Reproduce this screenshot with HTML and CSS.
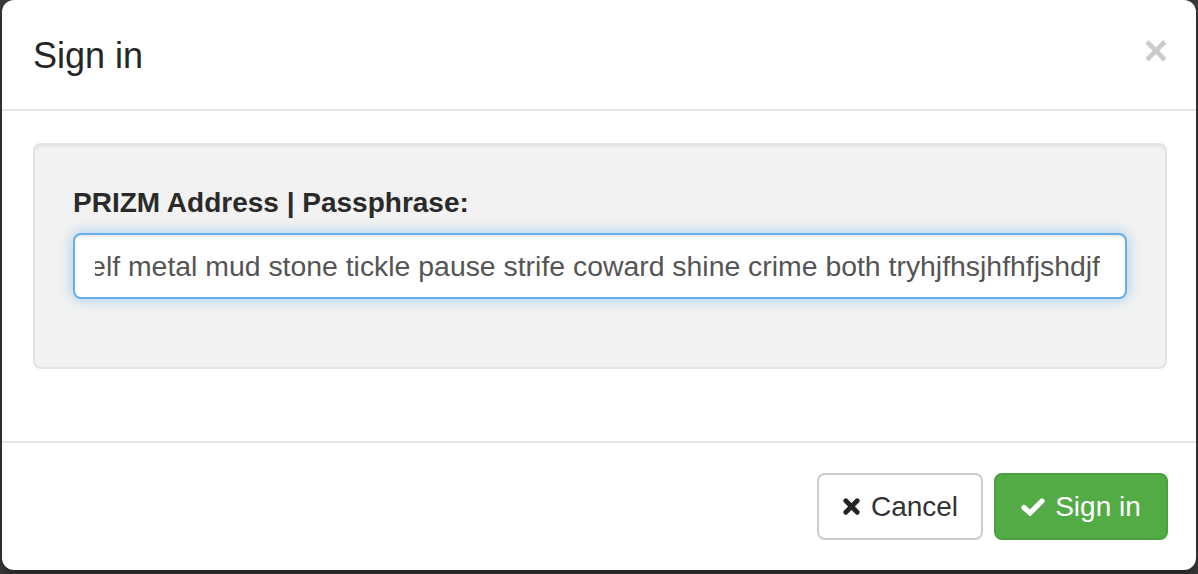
FILE: index.html
```html
<!DOCTYPE html>
<html lang="en">
<head>
<meta charset="utf-8">
<title>Sign in</title>
<link rel="stylesheet" href="styles.css">
</head>
<body>
<div class="modal">
  <div class="modal-header">
    <h4 class="modal-title">Sign in</h4>
    <button class="close" type="button">&times;</button>
  </div>
  <div class="modal-body">
    <div class="well">
      <label class="form-label">PRIZM Address | Passphrase:</label>
      <div class="form-control">
        <div class="field-clip"><span class="value">myself metal mud stone tickle pause strife coward shine crime both tryhjfhsjhfhfjshdjf</span></div>
      </div>
    </div>
  </div>
  <div class="modal-footer">
    <button class="btn btn-default" type="button">
      <svg class="icon icon-times" viewBox="0 0 20 20" aria-hidden="true"><path d="M4 4 L16 16 M16 4 L4 16" /></svg>
      Cancel
    </button>
    <button class="btn btn-success" type="button">
      <svg class="icon icon-check" viewBox="0 0 24 18" aria-hidden="true"><path d="M3 9.5 L9 15 L21 3" /></svg>
      Sign in
    </button>
  </div>
</div>
</body>
</html>
```
FILE: styles.css
```css
html, body {
  margin: 0;
  padding: 0;
}
body {
  background: #3b3b3b;
  font-family: "Liberation Sans", Arial, sans-serif;
  font-size: 28px;
  color: #333;
  padding: 0 2px;
  height: 574px;
  overflow: hidden;
}
.modal {
  width: 1194px;
  height: 570px;
  box-sizing: border-box;
  background: #fff;
  border-radius: 12px;
  display: flex;
  flex-direction: column;
  box-shadow: 0 4px 10px rgba(0,0,0,.5);
}
.modal-header {
  display: flex;
  justify-content: space-between;
  align-items: flex-start;
  padding: 30px 30px 28px 31px;
  border-bottom: 2px solid #e5e5e5;
}
.modal-title {
  margin: 0;
  font-size: 36px;
  font-weight: normal;
  line-height: 51px;
  color: #262626;
}
.close {
  border: 0;
  background: none;
  padding: 0;
  margin-top: 0;
  margin-right: -2px;
  font-family: "Liberation Sans", Arial, sans-serif;
  font-size: 42px;
  font-weight: bold;
  line-height: 42px;
  color: #000;
  opacity: .2;
}
.modal-body {
  padding: 32px 29px 30px 31px;
}
.well {
  background: #f2f2f2;
  border: 2px solid #e3e3e3;
  border-radius: 8px;
  padding: 38px 38px 68px 38px;
  margin-bottom: 40px;
  box-shadow: inset 0 2px 2px rgba(0,0,0,.05);
  display: flex;
  flex-direction: column;
}
.form-label {
  font-weight: bold;
  line-height: 40px;
  margin-bottom: 10px;
  color: #2a2a2a;
  font-size: 28px;
}
.form-control {
  height: 66px;
  box-sizing: border-box;
  border: 2px solid #66afe9;
  border-radius: 8px;
  background: #fff;
  padding: 0 25px 0 20px;
  display: flex;
  align-items: center;
  box-shadow: inset 0 2px 2px rgba(0,0,0,.075), 0 0 14px rgba(102,175,233,.6);
  color: #555;
  font-size: 28.4px;
}
.field-clip {
  flex: 1;
  min-width: 0;
  display: flex;
  justify-content: flex-end;
  overflow: hidden;
  white-space: nowrap;
}
.value {
  flex: none;
}
.modal-footer {
  margin-top: auto;
  border-top: 2px solid #e5e5e5;
  padding: 30px 28px 30px 30px;
  display: flex;
  justify-content: flex-end;
  gap: 11px;
}
.btn {
  display: inline-flex;
  align-items: center;
  gap: 10px;
  height: 67px;
  box-sizing: border-box;
  padding: 0 24px;
  font-family: "Liberation Sans", Arial, sans-serif;
  font-size: 28px;
  border-radius: 8px;
  border: 2px solid transparent;
}
.btn-default {
  background: #fff;
  border-color: #ccc;
  color: #333;
  width: 166px;
  justify-content: center;
}
.btn-success {
  background: #53ab46;
  border-color: #4aa03e;
  color: #fff;
  width: 174px;
  justify-content: center;
}
.icon {
  flex: none;
  fill: none;
  stroke: currentColor;
}
.icon-times {
  width: 19px;
  height: 19px;
  stroke-width: 5;
  stroke-linecap: round;
  color: #222;
}
.icon-check {
  width: 24px;
  height: 18px;
  stroke-width: 5.2;
  stroke-linecap: round;
  stroke-linejoin: miter;
}
```
